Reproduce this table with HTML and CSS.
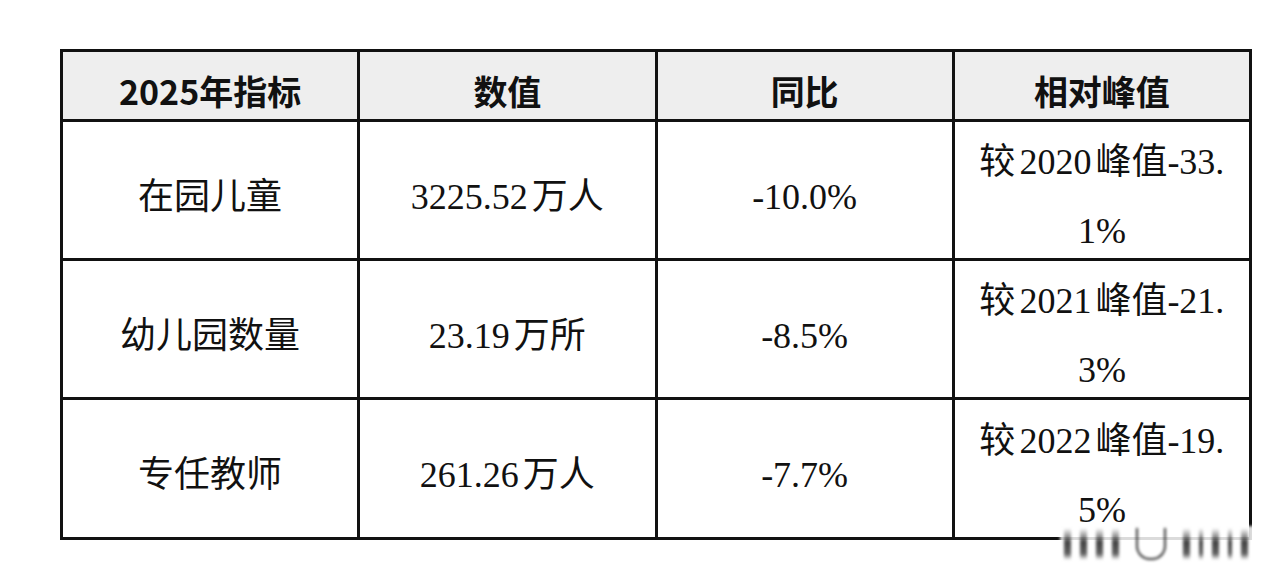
FILE: index.html
```html
<!DOCTYPE html>
<html lang="zh-CN">
<head>
<meta charset="utf-8">
<title>2025年指标</title>
<link rel="stylesheet" href="styles.css">
</head>
<body>
<div class="page">
  <div class="stats" role="table">
    <div class="cell head" role="columnheader">2025年指标</div>
    <div class="cell head" role="columnheader">数值</div>
    <div class="cell head" role="columnheader">同比</div>
    <div class="cell head" role="columnheader">相对峰值</div>

    <div class="cell" role="cell">在园儿童</div>
    <div class="cell" role="cell"><span class="line"><span class="num">3225.52</span>万人</span></div>
    <div class="cell" role="cell">-10.0%</div>
    <div class="cell" role="cell"><span class="line">较<span class="num mid">2020</span>峰值-33.</span><span class="line">1%</span></div>

    <div class="cell" role="cell">幼儿园数量</div>
    <div class="cell" role="cell"><span class="line"><span class="num">23.19</span>万所</span></div>
    <div class="cell" role="cell">-8.5%</div>
    <div class="cell" role="cell"><span class="line">较<span class="num mid">2021</span>峰值-21.</span><span class="line">3%</span></div>

    <div class="cell" role="cell">专任教师</div>
    <div class="cell" role="cell"><span class="line"><span class="num">261.26</span>万人</span></div>
    <div class="cell" role="cell">-7.7%</div>
    <div class="cell" role="cell"><span class="line">较<span class="num mid">2022</span>峰值-19.</span><span class="line">5%</span></div>
  </div>
  <div class="watermark" aria-hidden="true">
    <span class="bar"></span><span class="bar"></span><span class="bar"></span><span class="bar"></span>
    <span class="cup"></span>
    <span class="bar"></span><span class="bar thin"></span><span class="bar"></span><span class="bar thin"></span><span class="bar"></span>
  </div>
</div>
</body>
</html>
```

FILE: styles.css
```css
html, body {
  margin: 0;
  padding: 0;
  background: #ffffff;
}

.page {
  position: relative;
  width: 1280px;
  height: 580px;
  padding: 49px 0 0 60px;
  box-sizing: border-box;
}

.stats {
  width: 1192px;
  display: grid;
  grid-template-columns: repeat(4, 1fr);
  grid-template-rows: 67px 136px 136px 137px;
  gap: 3px;
  padding: 3px;
  box-sizing: border-box;
  background: #111111;
  color: #111111;
}

.cell {
  background: #ffffff;
  display: flex;
  flex-direction: column;
  align-items: center;
  justify-content: center;
  text-align: center;
  box-sizing: border-box;
  padding-top: 14px;
  font-family: "Liberation Serif", "Noto Sans CJK SC", serif;
  font-weight: 400;
  font-size: 36px;
  line-height: 69px;
  white-space: nowrap;
  min-height: 0;
}

.cell.head {
  background: #eeeeee;
  padding-top: 10px;
  font-family: "Noto Sans CJK SC", "Noto Sans", sans-serif;
  font-weight: 700;
  font-size: 34px;
  line-height: 40px;
}

.line {
  display: block;
}

.num {
  margin-right: 4px;
}

.num.mid {
  margin-left: 4px;
}

.watermark {
  position: absolute;
  left: 1060px;
  top: 526px;
  width: 204px;
  height: 36px;
  padding: 2px 4px;
  box-sizing: border-box;
  display: flex;
  align-items: stretch;
  gap: 9px;
  background: rgba(255, 255, 255, 0.85);
  filter: blur(1.5px);
}

.watermark .bar {
  width: 7px;
  background: linear-gradient(rgba(255,255,255,0), #222222 45%, #444444 80%, rgba(255,255,255,0));
  opacity: 0.85;
}

.watermark .bar.thin {
  width: 4px;
}

.watermark .cup {
  width: 26px;
  margin: 0 8px;
  border: 2px solid #333333;
  border-top: none;
  border-radius: 0 0 14px 14px;
}
```
